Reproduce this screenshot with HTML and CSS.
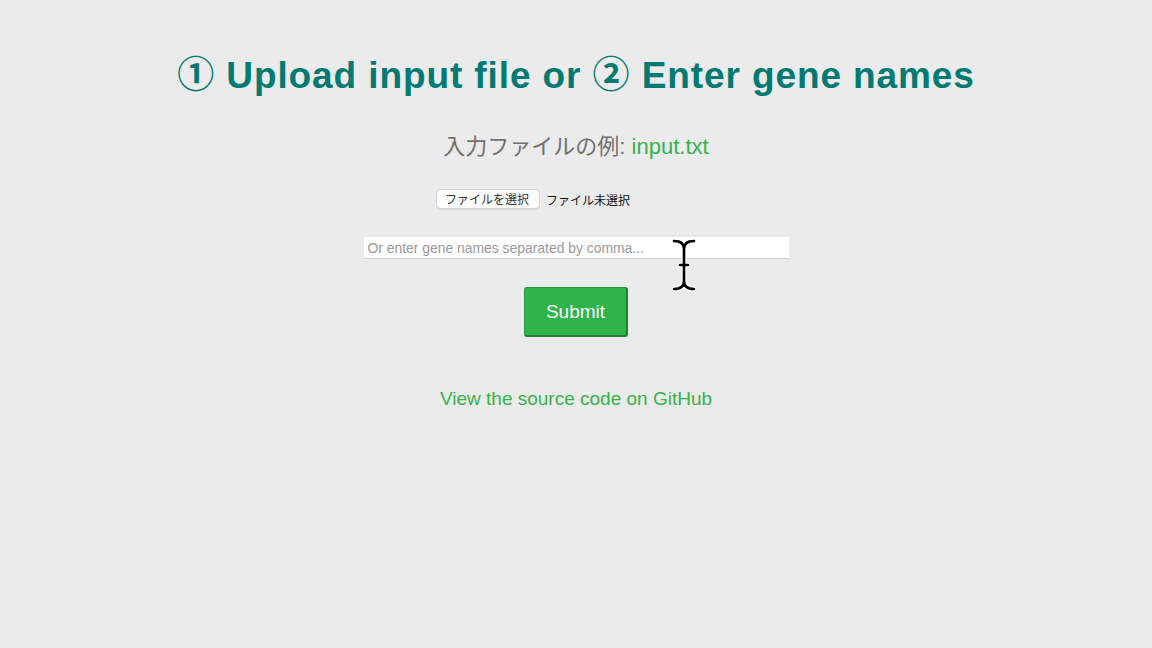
FILE: index.html
```html
<!DOCTYPE html>
<html lang="ja">
<head>
<meta charset="utf-8">
<title>Upload</title>
<link rel="stylesheet" href="styles.css">
</head>
<body>
<main class="page">
  <h1 class="title">① Upload input file or ② Enter gene names</h1>
  <p class="example">入力ファイルの例: <a class="green-link" href="#">input.txt</a></p>
  <div class="file-row">
    <span class="file-btn">ファイルを選択</span>
    <span class="file-status">ファイル未選択</span>
  </div>
  <div class="input-wrap">
    <input class="genes" type="text" placeholder="Or enter gene names separated by comma...">
    <svg class="ibeam" width="26" height="54" viewBox="0 0 26 54" aria-hidden="true">
      <path d="M3 3 C9 3 13 5 13 11 L13 43 C13 49 9 51 3 51 M23 3 C17 3 13 5 13 11 M13 43 C13 49 17 51 23 51 M9 27 L17 27" fill="none" stroke="#fff" stroke-width="5" stroke-linecap="round"/>
      <path d="M3 3 C9 3 13 5 13 11 L13 43 C13 49 9 51 3 51 M23 3 C17 3 13 5 13 11 M13 43 C13 49 17 51 23 51 M9 27 L17 27" fill="none" stroke="#000" stroke-width="2.6" stroke-linecap="round"/>
    </svg>
  </div>
  <button class="submit" type="button">Submit</button>
  <a class="source-link" href="#">View the source code on GitHub</a>
</main>
</body>
</html>
```

FILE: styles.css
```css
html, body {
  margin: 0;
  padding: 0;
  background: #ebebeb;
  font-family: "Liberation Sans", Arial, "Noto Sans CJK JP", sans-serif;
}
.page {
  width: 1152px;
  height: 648px;
  display: flex;
  flex-direction: column;
  align-items: center;
}
.title {
  margin: 54px 0 0;
  font-size: 37px;
  font-weight: bold;
  color: #007a72;
  line-height: 44px;
  letter-spacing: 0.9px;
}
.example {
  margin: 36px 0 0;
  font-size: 22px;
  line-height: 26px;
  color: #6f6f6f;
  font-family: "Liberation Sans", "Noto Sans CJK JP", sans-serif;
}
.green-link {
  color: #36b34a;
  text-decoration: none;
}
.file-row {
  margin: 29px 0 0;
  width: 280px;
  display: flex;
  align-items: center;
  gap: 6px;
  font-family: "Noto Sans CJK JP", sans-serif;
  font-size: 12px;
  color: #1a1a1a;
}
.file-btn {
  background: #fdfdfd;
  border: 1px solid #d6d6d6;
  border-radius: 5px;
  height: 18px;
  line-height: 18px;
  width: 86px;
  padding: 0 8px;
  color: #333;
  box-shadow: 0 1px 1px rgba(0,0,0,0.08);
}
.file-status {
  color: #111;
}
.input-wrap {
  position: relative;
  margin: 28px 0 0;
}
.genes {
  display: block;
  width: 425px;
  height: 22px;
  box-sizing: border-box;
  border: none;
  border-bottom: 1px solid #d6d6d6;
  background: #fff;
  padding: 0 4px;
  font-family: "Liberation Sans", Arial, sans-serif;
  font-size: 13.9px;
  color: #333;
  outline: none;
}
.genes::placeholder {
  color: #9a9a9a;
}
.ibeam {
  position: absolute;
  left: 307px;
  top: 1px;
}
.submit {
  margin: 28px 0 0;
  width: 104px;
  height: 50px;
  box-sizing: border-box;
  background: #2eb44a;
  border: 1px solid #27973f;
  border-bottom: 2px solid #1f7f33;
  border-right: 2px solid #1f7f33;
  border-radius: 3px;
  color: #fff;
  font-family: "Liberation Sans", Arial, sans-serif;
  font-size: 19px;
  padding: 0;
}
.source-link {
  margin: 51px 0 0;
  font-size: 19px;
  line-height: 22px;
  color: #36b34a;
  text-decoration: none;
}
```
